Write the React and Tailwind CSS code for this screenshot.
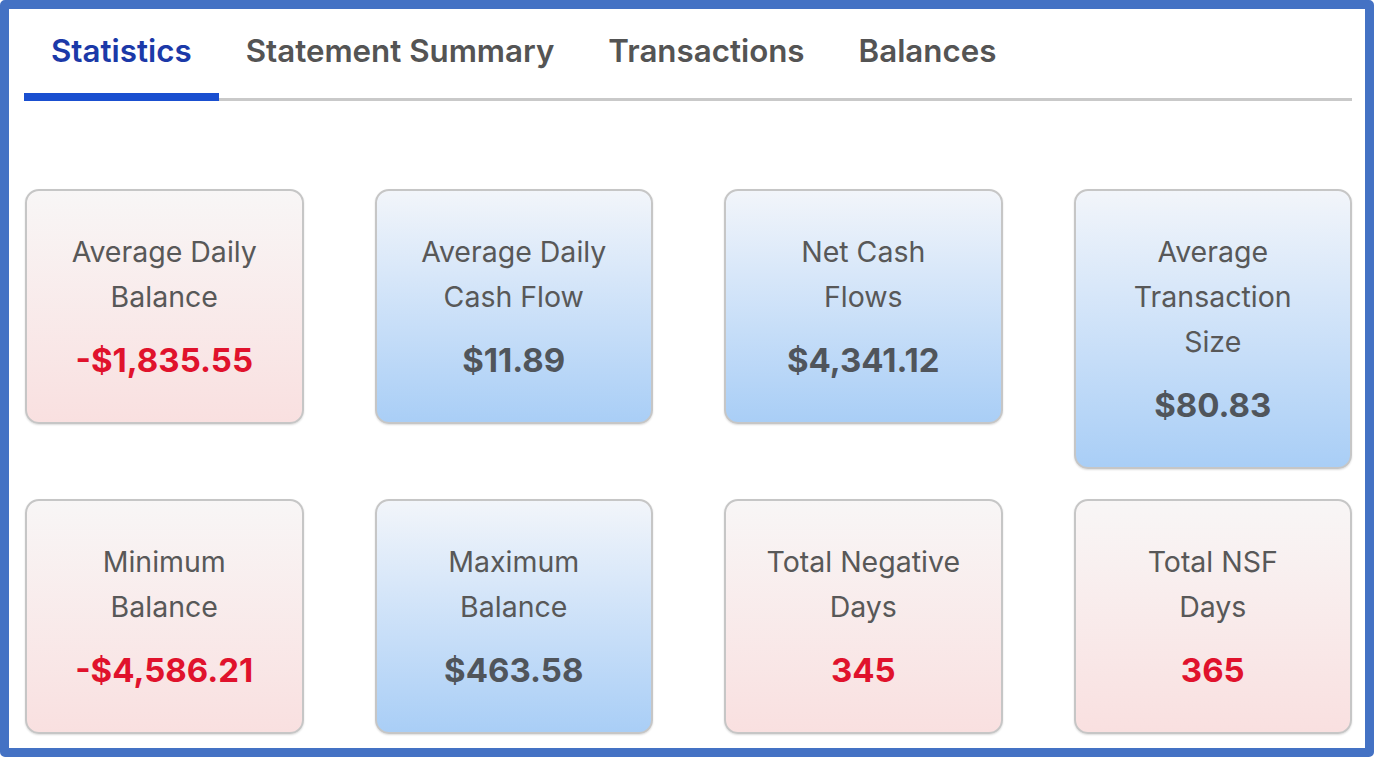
const tabs = ['Statistics', 'Statement Summary', 'Transactions', 'Balances'];

const stats = [
  { label: ['Average Daily', 'Balance'], value: '-$1,835.55', tone: 'red' },
  { label: ['Average Daily', 'Cash Flow'], value: '$11.89', tone: 'blue' },
  { label: ['Net Cash', 'Flows'], value: '$4,341.12', tone: 'blue' },
  { label: ['Average', 'Transaction', 'Size'], value: '$80.83', tone: 'blue' },
  { label: ['Minimum', 'Balance'], value: '-$4,586.21', tone: 'red' },
  { label: ['Maximum', 'Balance'], value: '$463.58', tone: 'blue' },
  { label: ['Total Negative', 'Days'], value: '345', tone: 'red' },
  { label: ['Total NSF', 'Days'], value: '365', tone: 'red' },
];

function StatCard({ label, value, tone }) {
  const isRed = tone === 'red';
  return (
    <div
      className={`rounded-[14px] border-2 border-[#c6c6c6] pt-[38px] pb-[39px] text-center shadow-[0_1px_2px_rgba(0,0,0,0.14)] ${
        isRed
          ? 'bg-gradient-to-b from-[#f8f6f6] to-[#f9e0e0]'
          : 'bg-gradient-to-b from-[#f2f5fa] to-[#a9cef6]'
      }`}
    >
      {label.map((line) => (
        <div key={line} className="text-[28.5px] leading-[45px] text-[#585858]">
          {line}
        </div>
      ))}
      <div
        className={`mt-[19px] text-[33px] leading-[45px] font-bold ${
          isRed ? 'text-[#e0122c]' : 'text-[#50555b]'
        }`}
      >
        {value}
      </div>
    </div>
  );
}

export default function App() {
  return (
    <div className="w-[1375px] h-[759px] bg-white" style={{ fontFamily: 'Inter, "Noto Sans", sans-serif' }}>
      <div className="w-[1374px] h-[757px] rounded-[5px] border-[9px] border-[#4472c4] bg-white pl-[15px] pr-[13px]">
        {/* tabs */}
        <div className="flex border-b-[3px] border-[#c9c9c9] pt-[22px]">
          {tabs.map((tab, i) => (
            <div
              key={tab}
              className={`px-[27px] pb-[22px] text-[31.3px] leading-[40px] font-semibold -mb-[3px] ${
                i === 0
                  ? 'text-[#1b39a8] border-b-[8px] border-[#1a4fd0] pb-[14px]'
                  : 'text-[#545454]'
              }`}
            >
              {tab}
            </div>
          ))}
        </div>

        {/* stat cards */}
        <div className="mt-[88px] ml-[1px] grid grid-cols-4 items-start gap-x-[71px] gap-y-[30px]">
          {stats.map((s) => (
            <StatCard key={s.value} {...s} />
          ))}
        </div>
      </div>
    </div>
  );
}
